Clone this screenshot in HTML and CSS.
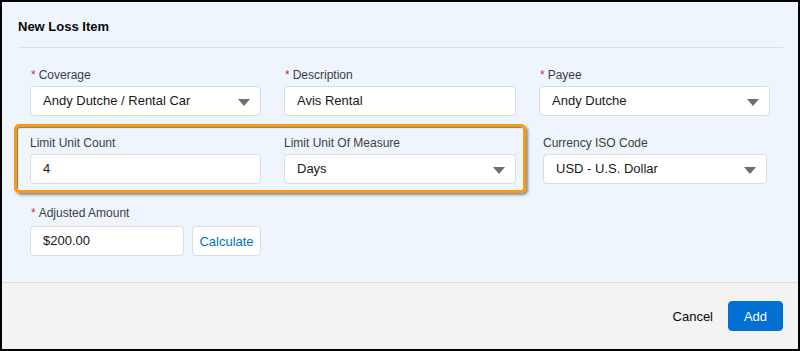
FILE: index.html
```html
<!DOCTYPE html>
<html lang="en">
<head>
    <meta charset="UTF-8">
    <title>New Loss Item</title>
    <link rel="stylesheet" href="styles.css">
</head>
<body>
    <div class="modal">
        <div class="modal-header">
            <h2>New Loss Item</h2>
        </div>
        <div class="modal-body">
            <div class="row row-top">
                <div class="field">
                    <label><span class="req">*</span>Coverage</label>
                    <div class="input select">Andy Dutche / Rental Car<span class="caret"></span></div>
                </div>
                <div class="field">
                    <label><span class="req">*</span>Description</label>
                    <div class="input">Avis Rental</div>
                </div>
                <div class="field">
                    <label><span class="req">*</span>Payee</label>
                    <div class="input select">Andy Dutche<span class="caret"></span></div>
                </div>
            </div>
            <div class="row row-mid">
                <div class="highlight">
                    <div class="field">
                        <label>Limit Unit Count</label>
                        <div class="input">4</div>
                    </div>
                    <div class="field">
                        <label>Limit Unit Of Measure</label>
                        <div class="input select">Days<span class="caret"></span></div>
                    </div>
                </div>
                <div class="field currency">
                    <label>Currency ISO Code</label>
                    <div class="input select">USD - U.S. Dollar<span class="caret"></span></div>
                </div>
            </div>
            <div class="row-amount">
                <label><span class="req">*</span>Adjusted Amount</label>
                <div class="amount-line">
                    <div class="input amount">$200.00</div>
                    <button class="calc-button">Calculate</button>
                </div>
            </div>
        </div>
        <div class="modal-footer">
            <button class="cancel-button">Cancel</button>
            <button class="add-button">Add</button>
        </div>
    </div>
</body>
</html>
```

FILE: styles.css
```css
body {
    margin: 0;
    font-family: "Liberation Sans", Arial, sans-serif;
    color: #181818;
}
.modal {
    width: 800px;
    height: 351px;
    box-sizing: border-box;
    border: 2px solid #000;
    background: #eef5fd;
    display: flex;
    flex-direction: column;
}
.modal-header {
    margin: 0 15px 0 16px;
    padding: 15px 0 10px 0;
    border-bottom: 1px solid #d9e2ec;
}
.modal-header h2 {
    margin: 0;
    font-size: 13px;
    line-height: 20px;
    font-weight: bold;
    color: #080707;
}
.modal-body {
    flex: 1;
    padding: 18px 0 0 28px;
}
.row-top {
    display: grid;
    grid-template-columns: 231px 232px 231px;
    column-gap: 23px;
}
.field label,
.row-amount label {
    display: block;
    font-size: 12px;
    line-height: 18px;
    color: #3e3e3c;
    margin-bottom: 2px;
}
.req {
    color: #c23934;
    margin-right: 3px;
    margin-left: 1px;
}
.input {
    height: 30px;
    box-sizing: border-box;
    background: #fff;
    border: 1px solid #d8dde6;
    border-radius: 4px;
    padding: 0 12px;
    font-size: 13px;
    line-height: 28px;
    position: relative;
}
.caret {
    position: absolute;
    right: 10px;
    top: 12px;
    width: 0;
    height: 0;
    border-left: 6px solid transparent;
    border-right: 6px solid transparent;
    border-top: 7px solid #706e6b;
}
.row-mid {
    display: flex;
    align-items: flex-start;
    margin: 8px 0 0 -16px;
}
.highlight {
    width: 512px;
    box-sizing: border-box;
    border: 3px solid #fb9a0e;
    border-radius: 5px;
    padding: 7px 7px 6px 13px;
    display: grid;
    grid-template-columns: 231px 232px;
    column-gap: 23px;
    box-shadow: 2px 2px 3px rgba(0, 0, 0, 0.45), inset 1px 1px 1px rgba(0, 0, 0, 0.5);
}
.currency {
    width: 224px;
    margin: 10px 0 0 17px;
}
.row-amount {
    margin-top: 11px;
}
.row-amount label {
    margin-bottom: 4px;
}
.amount-line {
    display: flex;
    gap: 8px;
}
.amount {
    width: 154px;
}
.calc-button {
    height: 30px;
    width: 69px;
    background: #fff;
    border: 1px solid #d8dde6;
    border-radius: 4px;
    color: #0070d2;
    font-family: inherit;
    font-size: 13px;
    padding: 0;
}
.modal-footer {
    height: 67px;
    box-sizing: border-box;
    border-top: 1px solid #dddbda;
    background: #f3f3f3;
    display: flex;
    justify-content: flex-end;
    align-items: flex-start;
    padding: 18px 15px 0 0;
}
.cancel-button {
    background: none;
    border: none;
    font-family: inherit;
    font-size: 13px;
    color: #080707;
    height: 30px;
    padding: 0 15px;
}
.add-button {
    height: 30px;
    width: 55px;
    background: #0070d2;
    border: 1px solid #0070d2;
    border-radius: 4px;
    color: #fff;
    font-family: inherit;
    font-size: 13px;
    padding: 0;
}
```
